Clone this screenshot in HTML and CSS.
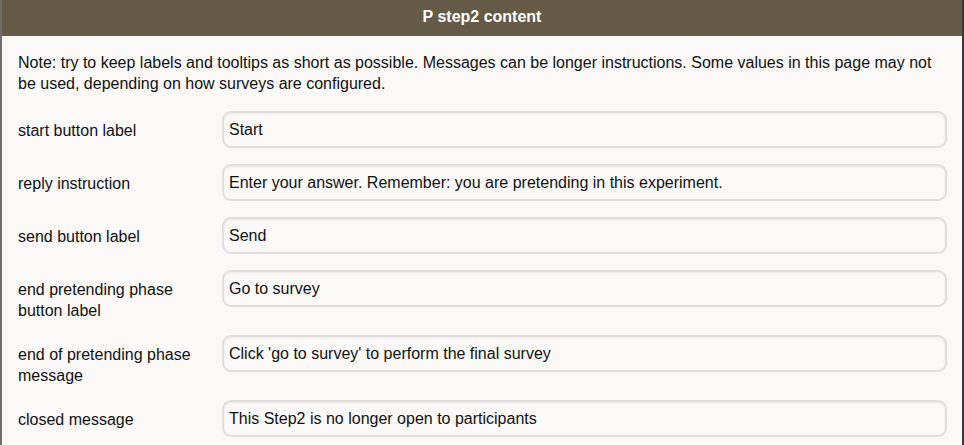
FILE: index.html
```html
<!DOCTYPE html>
<html>
<head>
<meta charset="utf-8">
<link rel="stylesheet" href="styles.css">
</head>
<body>
<div class="panel">
  <div class="panel-head">P step2 content</div>
  <div class="panel-body">
    <p class="note">Note: try to keep labels and tooltips as short as possible. Messages can be longer instructions. Some values in this page may not be used, depending on how surveys are configured.</p>
    <div class="form">
      <label class="lbl">start button label</label>
      <div class="field">Start</div>
      <label class="lbl">reply instruction</label>
      <div class="field">Enter your answer. Remember: you are pretending in this experiment.</div>
      <label class="lbl">send button label</label>
      <div class="field">Send</div>
      <label class="lbl">end pretending phase button label</label>
      <div class="field">Go to survey</div>
      <label class="lbl">end of pretending phase message</label>
      <div class="field">Click 'go to survey' to perform the final survey</div>
      <label class="lbl">closed message</label>
      <div class="field">This Step2 is no longer open to participants</div>
    </div>
  </div>
</div>
</body>
</html>
```
FILE: styles.css
```css
html, body {
  margin: 0;
  padding: 0;
  background: #faf9f7;
}
body {
  font-family: "Liberation Sans", Arial, sans-serif;
  font-size: 16px;
  color: #111;
}
.panel {
  border-left: 2px solid #6e6e6e;
  border-right: 2px solid #3a3a3a;
  min-height: 445px;
  box-sizing: border-box;
}
.panel-head {
  background: #655a45;
  color: #fff;
  font-weight: bold;
  text-align: center;
  height: 36px;
  line-height: 34px;
}
.panel-body {
  padding: 16px 15px 0 16px;
}
.note {
  margin: 0 0 17px 0;
  line-height: 21px;
}
.form {
  display: grid;
  grid-template-columns: 204px 1fr;
  column-gap: 0;
}
.lbl {
  padding: 9px 14px 14px 0;
  line-height: 21px;
}
.field {
  height: 37px;
  box-sizing: border-box;
  border: 2px solid #e0dfdd;
  border-radius: 9px;
  box-shadow: inset 0 1px 2px rgba(0,0,0,0.06);
  padding: 0 5px;
  line-height: 33px;
  white-space: nowrap;
  margin-bottom: 16px;
  background: #faf9f7;
}
```
